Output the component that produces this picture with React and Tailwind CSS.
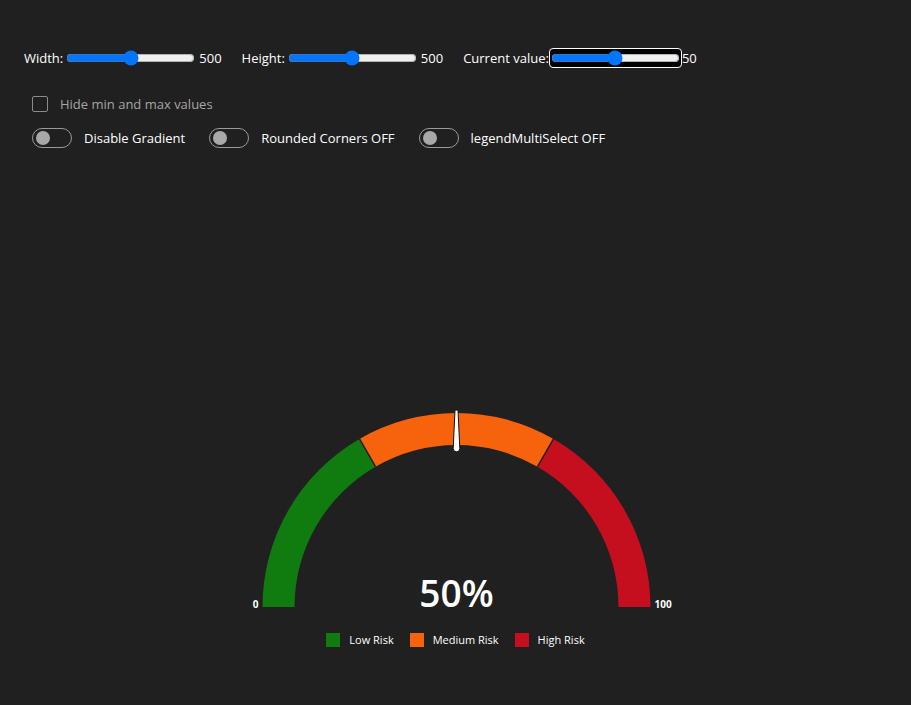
import React from "react";

const font = { fontFamily: '"Open Sans", "Noto Sans", sans-serif' };

function Toggle({ label }) {
  return (
    <div className="flex items-center gap-3">
      <div className="w-10 h-5 rounded-full border border-[#9a9a9a] flex items-center px-[3px]">
        <div className="w-[14px] h-[14px] rounded-full bg-[#a8a8a8]" />
      </div>
      <span className="text-[13px] leading-5 text-white">{label}</span>
    </div>
  );
}

function Legend({ color, label }) {
  return (
    <div className="flex items-center gap-[9px]">
      <div className={`w-[14px] h-[14px] ${color}`} />
      <span className="text-[11px] leading-[14px] text-white">{label}</span>
    </div>
  );
}

export default function App() {
  return (
    <div className="w-full h-[705px] bg-[#202020] overflow-hidden" style={font}>
      <div className="mt-[48px] pl-6 flex items-center h-5 text-[13px] leading-5 text-white">
        <label className="flex items-center">
          Width:
          <input type="range" min="0" max="1000" defaultValue="500" className="mx-[3px] accent-[#0075ff]" />
          <span className="ml-[1px]">500</span>
        </label>
        <label className="flex items-center ml-5">
          Height:
          <input type="range" min="0" max="1000" defaultValue="500" className="mx-[3px] accent-[#0075ff]" />
          <span className="ml-[1px]">500</span>
        </label>
        <label className="flex items-center ml-5">
          Current value:
          <span className="rounded-[4px] border border-white bg-black flex items-center px-[1px] py-[1px]">
            <input type="range" min="0" max="100" defaultValue="50" className="m-0 accent-[#0075ff]" />
          </span>
          <span>50</span>
        </label>
      </div>
      <div className="pl-8 mt-[28px] h-4 flex items-center gap-3">
        <div className="w-4 h-4 rounded-[2px] border border-[#8a8a8a]" />
        <span className="text-[13px] leading-4 text-[#a6a6a6]">Hide min and max values</span>
      </div>
      <div className="pl-8 mt-[16px] h-5 flex items-center gap-6">
        <Toggle label="Disable Gradient" />
        <Toggle label="Rounded Corners OFF" />
        <Toggle label="legendMultiSelect OFF" />
      </div>
      <svg width="500" height="230" viewBox="0 0 500 230" className="mx-auto mt-[242px] block">
        <path d="M 56.5 217 A 194 194 0 0 1 153.5 48.99 L 169.5 76.70 A 162 162 0 0 0 88.5 217 Z" fill="#107c10" />
        <path d="M 153.5 48.99 A 194 194 0 0 1 347.5 48.99 L 331.5 76.70 A 162 162 0 0 0 169.5 76.70 Z" fill="#f7630c" />
        <path d="M 347.5 48.99 A 194 194 0 0 1 444.5 217 L 412.5 217 A 162 162 0 0 0 331.5 76.70 Z" fill="#c50f1f" />
        <line x1="153.5" y1="48.99" x2="169.5" y2="76.70" stroke="#202020" strokeWidth="1.5" />
        <line x1="347.5" y1="48.99" x2="331.5" y2="76.70" stroke="#202020" strokeWidth="1.5" />
        <path d="M 249 20 L 252 20 L 253.8 58.5 A 3.3 3.3 0 0 1 247.2 58.5 Z" fill="#ffffff" stroke="#111111" strokeWidth="1" />
        <text x="52.5" y="218" textAnchor="end" fill="#ffffff" fontSize="10" fontWeight="700" style={font}>0</text>
        <text x="448.5" y="218" textAnchor="start" fill="#ffffff" fontSize="10" fontWeight="700" style={font}>100</text>
        <text x="250.5" y="217" textAnchor="middle" fill="#ffffff" fontSize="37" fontWeight="600" style={font}>50%</text>
      </svg>
      <div className="mt-[13px] flex justify-center gap-4">
        <Legend color="bg-[#107c10]" label="Low Risk" />
        <Legend color="bg-[#f7630c]" label="Medium Risk" />
        <Legend color="bg-[#c50f1f]" label="High Risk" />
      </div>
    </div>
  );
}
